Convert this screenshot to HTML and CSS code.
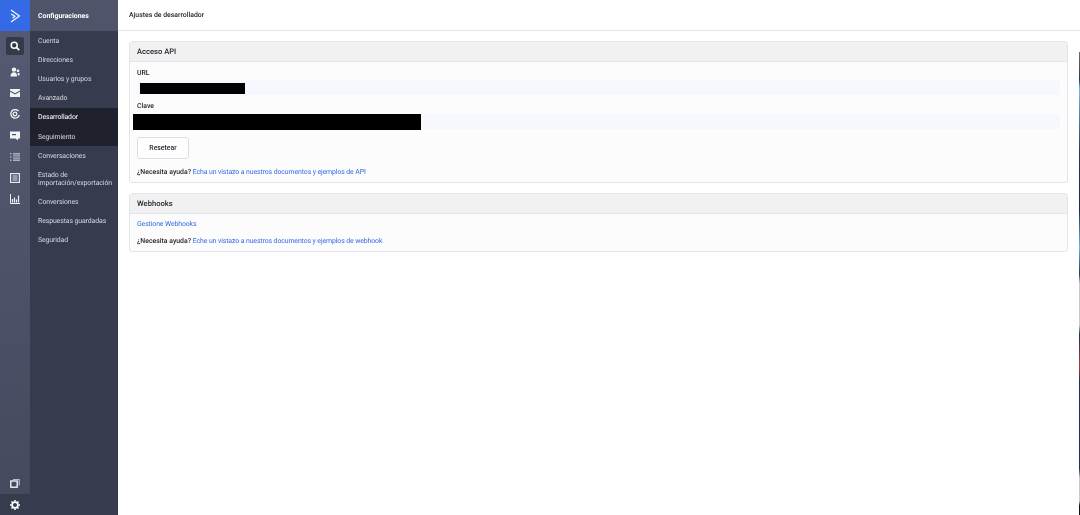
FILE: index.html
```html
<!DOCTYPE html>
<html lang="es">
<head>
<meta charset="utf-8">
<title>Ajustes de desarrollador</title>
<link rel="stylesheet" href="styles.css">
</head>
<body>
<div class="app">
  <nav class="rail">
    <div class="logo">
      <svg width="14" height="14" viewBox="0 0 14 14"><path d="M3 1 11.5 7 3 13M3.2 5 7 7.3 4.6 9" fill="none" stroke="#fff" stroke-width="1.1"/></svg>
    </div>
    <div class="rail-icons">
      <a class="tile tile-active"><svg width="10" height="10" viewBox="0 0 10 10"><circle cx="4.2" cy="4.2" r="3" fill="none" stroke="#fff" stroke-width="1.5"/><path d="M6.4 6.4 9.2 9.2" stroke="#fff" stroke-width="1.7"/></svg></a>
      <a class="tile"><svg width="10" height="10" viewBox="0 0 10 10" fill="#f2f3f6"><circle cx="4" cy="2.6" r="2.2"/><path d="M.5 9.5C.5 6.5 2 5.2 4 5.2S7 6.5 7 9.5Z"/><circle cx="8" cy="3.8" r="1.4"/><path d="M7.6 6h1.9V8.6H7.9Z"/></svg></a>
      <a class="tile"><svg width="10" height="8" viewBox="0 0 10 8"><path d="M0 0H10V1.5L5 4.2 0 1.5Z" fill="#f2f3f6"/><path d="M0 2.8 5 5.5 10 2.8V8H0Z" fill="#f2f3f6"/></svg></a>
      <a class="tile"><svg width="10" height="10" viewBox="0 0 10 10" fill="none" stroke="#f2f3f6"><path d="M8.6 2.2A4.3 4.3 0 1 0 9.3 6" stroke-width="1.3"/><circle cx="5" cy="5" r="1.8" stroke-width="1.3"/></svg></a>
      <a class="tile"><svg width="10" height="10" viewBox="0 0 10 10"><path d="M0 .5H10V7.5H8V9.5L5.5 7.5H0Z" fill="#f2f3f6"/><path d="M2 3H6V4.2H2Z" fill="#4a4f64"/></svg></a>
      <a class="tile"><svg width="10" height="8" viewBox="0 0 10 8" fill="#aeb2c0"><path d="M0 0H1.5V1.4H0ZM0 3.3H1.5V4.7H0ZM0 6.6H1.5V8H0ZM3 0H10V1.4H3ZM3 2.2H10V3.6H3ZM3 4.4H10V5.8H3ZM3 6.6H10V8H3Z"/></svg></a>
      <a class="tile"><svg width="10" height="10" viewBox="0 0 10 10" fill="none" stroke="#f2f3f6"><rect x=".6" y=".6" width="8.8" height="8.8" stroke-width="1.1"/><path d="M2.5 3H7.5M2.5 5H7.5M2.5 7H7.5" stroke-width=".9"/></svg></a>
      <a class="tile"><svg width="10" height="10" viewBox="0 0 10 10" fill="none" stroke="#f2f3f6"><path d="M.5 0V9.5H10" stroke-width="1"/><path d="M2.5 8.5V5M4.5 8.5V3.5M6.5 8.5V5.5M8.5 8.5V1.5" stroke-width="1.2"/></svg></a>
    </div>
    <a class="tile tile-bottom"><svg width="10" height="10" viewBox="0 0 10 10" fill="none"><path d="M3 1.5H9.2V7.5" stroke="#b9bcc9" stroke-width="1.2"/><rect x=".8" y="3" width="6.4" height="6.2" stroke="#fff" stroke-width="1.3"/></svg></a>
    <a class="gear"><svg width="10" height="10" viewBox="0 0 10 10"><circle cx="5" cy="5" r="2.9" fill="none" stroke="#fff" stroke-width="1.7"/><path d="M5 0V10M0 5H10M1.5 1.5 8.5 8.5M8.5 1.5 1.5 8.5" stroke="#fff" stroke-width="1.5" stroke-dasharray="1.5 7"/></svg></a>
  </nav>
  <aside class="side">
    <div class="side-head">Configuraciones</div>
    <ul class="side-list">
      <li class="side-item">Cuenta</li>
      <li class="side-item">Direcciones</li>
      <li class="side-item">Usuarios y grupos</li>
      <li class="side-item">Avanzado</li>
      <li class="side-item is-current">Desarrollador</li>
      <li class="side-item is-open">Seguimiento</li>
      <li class="side-item">Conversaciones</li>
      <li class="side-item">Estado de importación/exportación</li>
      <li class="side-item">Conversiones</li>
      <li class="side-item">Respuestas guardadas</li>
      <li class="side-item">Seguridad</li>
    </ul>
  </aside>
  <main class="main">
    <header class="top">Ajustes de desarrollador</header>
    <div class="content">
      <section class="card">
        <h2 class="card-head">Acceso API</h2>
        <div class="card-body">
          <div class="label">URL</div>
          <div class="field field-url"><span class="mask mask-url"></span></div>
          <div class="label label-key">Clave</div>
          <div class="field"><span class="mask mask-key"></span></div>
          <button class="btn" type="button">Resetear</button>
          <p class="help help-api"><b>¿Necesita ayuda?</b> <a>Echa un vistazo a nuestros documentos y ejemplos de API</a></p>
        </div>
      </section>
      <section class="card">
        <h2 class="card-head">Webhooks</h2>
        <div class="card-body card-body-hooks">
          <p class="manage"><a>Gestione Webhooks</a></p>
          <p class="help"><b>¿Necesita ayuda?</b> <a>Eche un vistazo a nuestros documentos y ejemplos de webhook</a></p>
        </div>
      </section>
    </div>
  </main>
  <div class="edge"></div>
</div>
</body>
</html>
```
FILE: styles.css
```css
* { box-sizing: border-box; }
html, body { margin: 0; height: 100%; overflow: hidden; }
body { font-family: Roboto, "Liberation Sans", sans-serif; font-size: 6.9px; color: #1f2129; background: #fff; text-rendering: geometricPrecision; }
.app { display: flex; height: 515px; width: 1080px; position: relative; will-change: transform; }

.rail { width: 30px; flex: none; display: flex; flex-direction: column; background: linear-gradient(#565b73, #454a5f 95%); }
.logo { height: 31px; flex: none; background: #356ae6; display: flex; align-items: center; justify-content: center; }
.rail-icons { flex: 1; display: flex; flex-direction: column; align-items: center; padding-top: 6px; }
.tile { width: 18px; height: 21.2px; display: flex; align-items: center; justify-content: center; flex: none; }
.tile-active { height: 18px; background: #353a4b; border-radius: 2px; margin-bottom: 6.4px; }
.tile-bottom { width: 30px; height: 22px; align-self: center; flex: none; }
.gear { height: 21px; flex: none; background: #363b4d; display: flex; align-items: center; justify-content: center; }

.side { width: 88px; flex: none; background: #363b4d; color: #d5d7df; }
.side-head { height: 31px; display: flex; align-items: center; padding-left: 8px; font-weight: 700; color: #fff; background: #50546a; }
.side-list { list-style: none; margin: 0; padding: 0; }
.side-item { min-height: 19.2px; padding: 5.6px 4px 5.6px 8px; line-height: 8px; letter-spacing: -.1px; }
.is-current, .is-open { background: #1f222d; }
.is-current { color: #fff; }

.main { flex: 1; min-width: 0; display: flex; flex-direction: column; }
.top { height: 31px; flex: none; display: flex; align-items: center; padding-left: 11px; font-weight: 500; border-bottom: 1px solid #e3e4ee; }
.content { padding: 10px 12px 0 11px; display: flex; flex-direction: column; gap: 10px; }

.card { border: 1px solid #e3e4ea; border-radius: 3px; background: #fcfcfc; overflow: hidden; }
.card-head { margin: 0; height: 19.5px; font-size: 7.6px; font-weight: 500; line-height: 19px; padding-left: 7px; background: #f1f1f2; border-bottom: 1px solid #e3e4ee; }
.card-body { padding: 7px 7px 0; height: 120.5px; position: relative; }
.card-body-hooks { height: 37.5px; padding-top: 6px; }
.label { font-weight: 500; line-height: 9px; }
.label-key { margin-top: 7px; }
.field { height: 15px; margin-top: 3px; background: #f7f8fd; position: relative; }
.field-url { margin-top: 2px; }
.mask { position: absolute; background: #000; }
.mask-url { left: 3px; top: 3px; width: 105px; height: 11px; }
.mask-key { left: -4px; top: 0; width: 288px; height: 16.5px; }
.btn { display: block; width: 52px; height: 22px; margin-top: 8px; font: 500 6.9px Roboto, "Liberation Sans", sans-serif; color: #1f2129; background: #fff; border: 1px solid #dcdde5; border-radius: 3px; padding: 0; }
p { margin: 0; line-height: 9px; }
.help { margin-top: 8px; }
.help-api { margin-top: 9px; }
.help b { font-weight: 500; }
a { color: #356ae6; letter-spacing: -.1px; }

.edge { position: absolute; right: 0; top: 52px; bottom: 0; width: 1px; background: linear-gradient(#7d6a66 0, #28384f 6%, #7fb6dc 8%, #28384f 22%, #1e2a40 34%, #6fb3e0 42%, #2b3a55 48%, #c9c9c9 50%, #c9c9c9 59%, #22304a 61%, #a83a42 68%, #22304a 71%, #22304a 90%, #c9c9c9 92%, #c9c9c9 97%, #111 98%); }
```
